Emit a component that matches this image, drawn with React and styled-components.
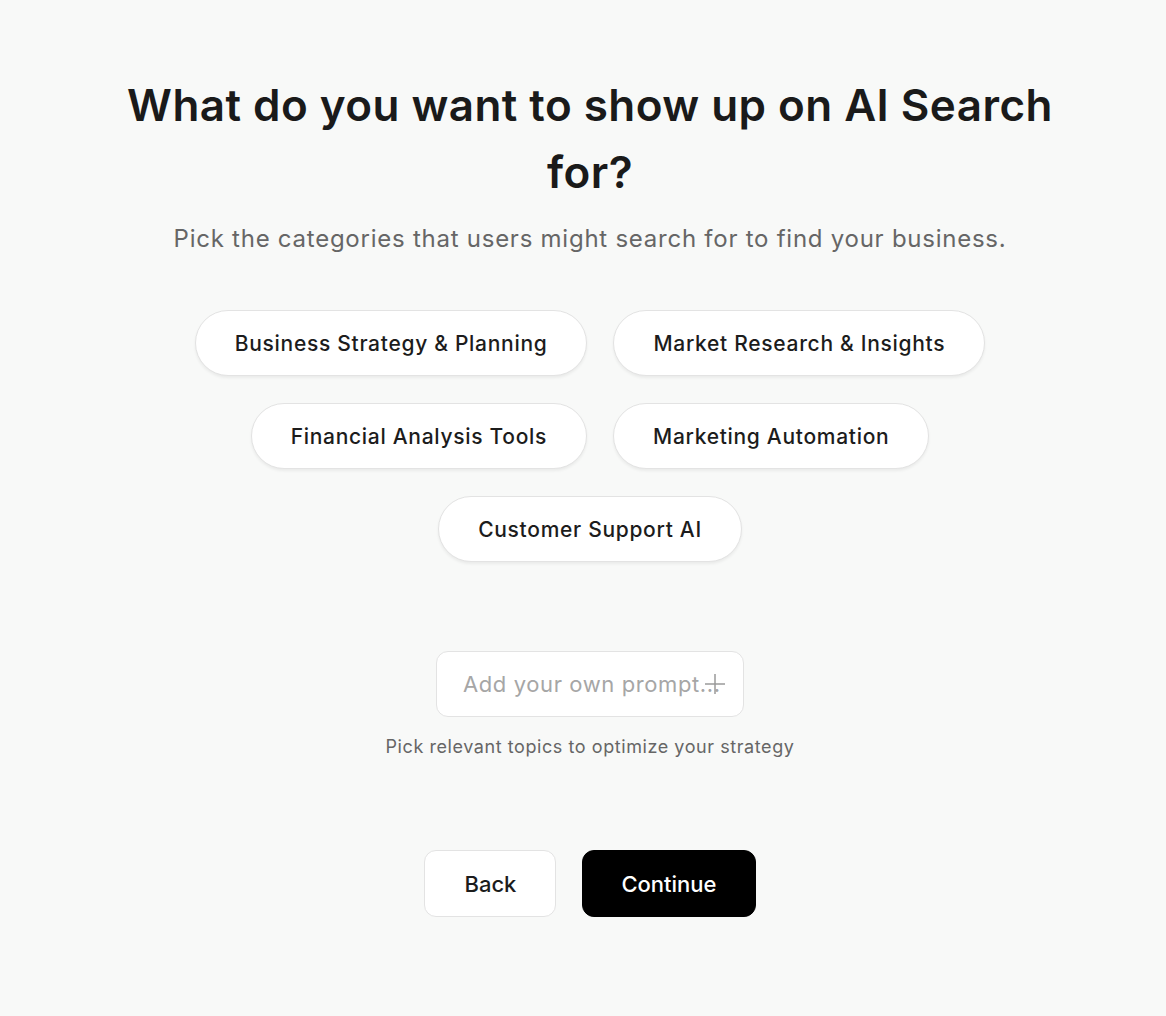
import React from 'react';
import styled, { createGlobalStyle } from 'styled-components';

const GlobalStyle = createGlobalStyle`
  html, body {
    margin: 0;
    padding: 0;
    background: #f8f9f8;
    font-family: Inter, "Noto Sans", sans-serif;
  }
`;

const Page = styled.main`
  min-height: 100vh;
  display: flex;
  flex-direction: column;
  align-items: center;
  padding: 72px 0 0 14px;
  box-sizing: border-box;
`;

const Title = styled.h1`
  margin: 0;
  max-width: 960px;
  text-align: center;
  font-size: 44px;
  line-height: 67px;
  font-weight: 600;
  color: #1a1a1a;
  letter-spacing: 0.45px;
`;

const Subtitle = styled.p`
  margin: 17px 0 0;
  font-size: 24px;
  line-height: 32px;
  color: #666;
  text-align: center;
  letter-spacing: 0.75px;
`;

const ChipGrid = styled.div`
  margin-top: 55px;
  max-width: 900px;
  display: flex;
  flex-wrap: wrap;
  justify-content: center;
  gap: 27px 26px;
`;

const Chip = styled.button`
  height: 66px;
  padding: 0 39px;
  border-radius: 33px;
  border: 1px solid #e3e3e3;
  background: #fff;
  box-shadow: 0 2px 3px rgba(0, 0, 0, 0.06);
  font-family: inherit;
  font-size: 21px;
  font-weight: 500;
  letter-spacing: 0.7px;
  color: #1c1c1c;
  cursor: pointer;
`;

const PromptBox = styled.label`
  position: relative;
  margin-top: 89px;
  width: 308px;
  height: 66px;
  box-sizing: border-box;
  border: 1px solid #e3e3e3;
  border-radius: 12px;
  background: #fff;
  display: flex;
  align-items: center;
`;

const PromptInput = styled.input`
  width: 100%;
  height: 100%;
  box-sizing: border-box;
  padding: 0 0 0 26px;
  border: none;
  outline: none;
  background: transparent;
  font-family: inherit;
  font-size: 22px;
  letter-spacing: 0.6px;
  color: #1c1c1c;
  &::placeholder {
    color: #a6a6a6;
  }
`;

const PlusMark = styled.span`
  position: absolute;
  right: 16px;
  top: 50%;
  transform: translateY(-50%);
  display: flex;
  pointer-events: none;
`;

const Hint = styled.p`
  margin: 19px 0 0;
  font-size: 18px;
  color: #666;
  letter-spacing: 0.57px;
`;

const Actions = styled.div`
  margin-top: 93px;
  display: flex;
  gap: 26px;
`;

const ActionButton = styled.button`
  height: 67px;
  padding: 0 ${p => (p.$primary ? '38px' : '39px')};
  border-radius: 12px;
  border: 1px solid ${p => (p.$primary ? '#000' : '#e3e3e3')};
  background: ${p => (p.$primary ? '#000' : '#fff')};
  color: ${p => (p.$primary ? '#fff' : '#1c1c1c')};
  font-family: inherit;
  font-size: 22px;
  font-weight: 500;
  cursor: pointer;
`;

const categories = [
  'Business Strategy & Planning',
  'Market Research & Insights',
  'Financial Analysis Tools',
  'Marketing Automation',
  'Customer Support AI',
];

const PlusIcon = () => (
  <svg width="24" height="24" viewBox="0 0 24 24" fill="none" stroke="#9a9a9a" strokeWidth="1.5">
    <path d="M12 2v20M2 12h20" />
  </svg>
);

export default function App() {
  return (
    <>
      <GlobalStyle />
      <Page>
        <Title>What do you want to show up on AI Search for?</Title>
        <Subtitle>Pick the categories that users might search for to find your business.</Subtitle>
        <ChipGrid>
          {categories.map(c => (
            <Chip key={c}>{c}</Chip>
          ))}
        </ChipGrid>
        <PromptBox>
          <PromptInput placeholder="Add your own prompt..." />
          <PlusMark>
            <PlusIcon />
          </PlusMark>
        </PromptBox>
        <Hint>Pick relevant topics to optimize your strategy</Hint>
        <Actions>
          <ActionButton>Back</ActionButton>
          <ActionButton $primary>Continue</ActionButton>
        </Actions>
      </Page>
    </>
  );
}
